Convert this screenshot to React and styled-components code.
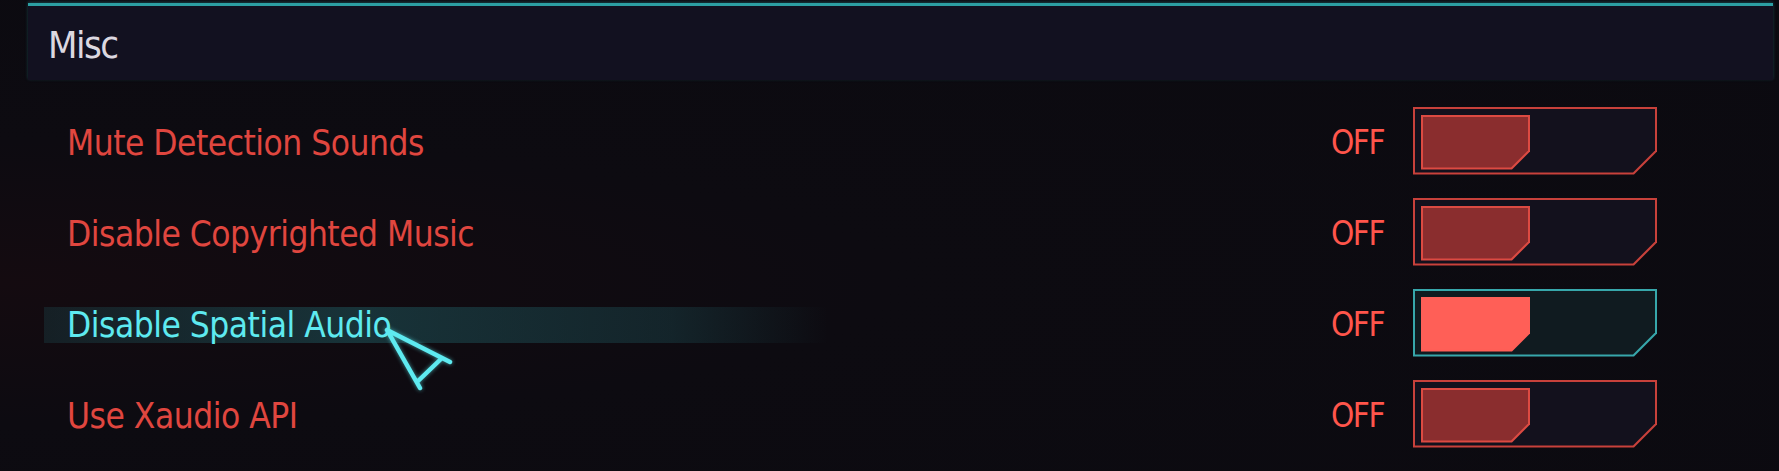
import React from 'react'
import styled, { createGlobalStyle } from 'styled-components'

const GlobalStyle = createGlobalStyle`
  html, body {
    margin: 0;
    padding: 0;
    background: #0d0b11;
  }
  * {
    box-sizing: border-box;
  }
`

const Page = styled.div`
  width: 1779px;
  height: 471px;
  overflow: hidden;
  padding-top: 3px;
  background: radial-gradient(ellipse at 0% 60%, #140b10 0%, #0d0b11 35%, #0b0a10 100%);
  font-family: 'DejaVu Sans Condensed', 'Liberation Sans Narrow', sans-serif;
`

const Header = styled.div`
  margin-left: 28px;
  width: 1745px;
  height: 77px;
  border-top: 3px solid #2c9fa3;
  background: #121120;
  display: flex;
  align-items: center;
  padding-left: 20px;
  box-shadow: 0 -1px 3px rgba(44, 159, 163, 0.35);
`

const HeaderTitle = styled.span`
  color: #dcd8e0;
  font-size: 38px;
  letter-spacing: -1.5px;
  line-height: 1;
  padding-top: 3px;
`

const List = styled.div`
  padding-top: 15px;
`

const Row = styled.div`
  height: 91px;
  display: flex;
  align-items: center;
  padding-right: 122px;
`

const LabelBar = styled.div`
  position: relative;
  margin-left: 44px;
  margin-top: 4px;
  width: 784px;
  height: 36px;
  padding-left: 23px;
  display: flex;
  align-items: center;
  background: ${(p) =>
    p.$active
      ? 'linear-gradient(90deg, rgba(28,70,76,0.35) 0%, rgba(30,84,90,0.55) 40%, rgba(28,74,80,0.4) 80%, rgba(20,50,56,0) 100%)'
      : 'transparent'};
`

const Label = styled.span`
  color: ${(p) => (p.$active ? '#5eeaf0' : '#e0463f')};
  font-size: 35px;
  letter-spacing: -0.5px;
  line-height: 1;
  padding-top: 2px;
  white-space: nowrap;
`

const Cursor = styled.svg`
  position: absolute;
  left: 336px;
  top: 12px;
  width: 84px;
  height: 80px;
  overflow: visible;
  filter: drop-shadow(0 0 2px rgba(94, 236, 242, 0.6));
`

const Value = styled.span`
  margin-left: auto;
  margin-right: 29px;
  color: #ff554b;
  font-size: 33px;
  letter-spacing: -1.5px;
  line-height: 1;
  padding-top: 4px;
`

const Toggle = styled.div`
  width: 244px;
  height: 68px;
  padding: 2px;
  background: ${(p) => (p.$active ? '#37a7ab' : '#c8413b')};
  clip-path: polygon(0 0, 100% 0, 100% calc(100% - 23px), calc(100% - 23px) 100%, 0 100%);
`

const ToggleBody = styled.div`
  height: 100%;
  padding: 6px 0 0 6px;
  background: ${(p) => (p.$active ? '#101b20' : '#13111d')};
  clip-path: polygon(0 0, 100% 0, 100% calc(100% - 22px), calc(100% - 22px) 100%, 0 100%);
`

const Knob = styled.div`
  width: 109px;
  height: 55px;
  padding: 2px;
  background: ${(p) => (p.$active ? '#ff5f57' : '#dc4a42')};
  clip-path: polygon(0 0, 100% 0, 100% calc(100% - 18px), calc(100% - 18px) 100%, 0 100%);
`

const KnobFill = styled.div`
  height: 100%;
  background: ${(p) => (p.$active ? '#ff5f57' : '#8a2d2e')};
  clip-path: polygon(0 0, 100% 0, 100% calc(100% - 17px), calc(100% - 17px) 100%, 0 100%);
`

const rows = [
  { label: 'Mute Detection Sounds' },
  { label: 'Disable Copyrighted Music' },
  { label: 'Disable Spatial Audio', active: true },
  { label: 'Use Xaudio API' },
]

const App = () => (
  <Page>
    <GlobalStyle />
    <Header>
      <HeaderTitle>Misc</HeaderTitle>
    </Header>
    <List>
      {rows.map((r) => (
        <Row key={r.label}>
          <LabelBar $active={r.active}>
            <Label $active={r.active}>{r.label}</Label>
            {r.active && (
              <Cursor viewBox="0 0 84 80">
                <path
                  d="M7 11 L70 43 M7 11 L40 69 M62 39 L37 63"
                  stroke="#5eeaf0"
                  strokeWidth="4.5"
                  fill="none"
                  strokeLinecap="round"
                  strokeLinejoin="round"
                />
              </Cursor>
            )}
          </LabelBar>
          <Value>OFF</Value>
          <Toggle $active={r.active}>
            <ToggleBody $active={r.active}>
              <Knob $active={r.active}>
                <KnobFill $active={r.active} />
              </Knob>
            </ToggleBody>
          </Toggle>
        </Row>
      ))}
    </List>
  </Page>
)

export default App
